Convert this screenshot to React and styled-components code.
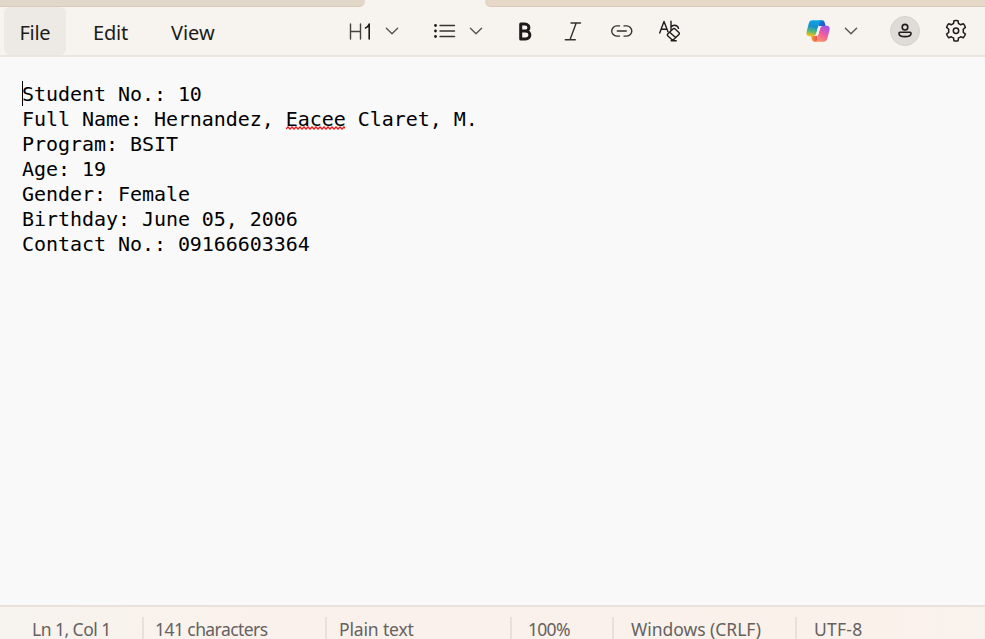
import React from "react";
import styled, { createGlobalStyle } from "styled-components";

const GlobalStyle = createGlobalStyle`
  * { box-sizing: border-box; }
  html, body { margin: 0; height: 100%; overflow: hidden; }
`;

const Window = styled.div`
  width: 985px;
  height: 639px;
  display: flex;
  flex-direction: column;
  overflow: hidden;
  background: #f9f9f9;
  font-family: "Noto Sans", sans-serif;
`;

const TabStrip = styled.div`
  height: 7px;
  flex: none;
  display: flex;
  justify-content: space-between;
  background: #f7f3ee;
`;

const InactiveTabs = styled.div`
  width: ${(p) => p.$width}px;
  background: ${(p) => p.$color};
  border-bottom: 1px solid #d9cbb9;
  border-radius: ${(p) => (p.$side === "left" ? "0 0 6px 0" : "0 0 0 6px")};
`;

const Toolbar = styled.header`
  height: 50px;
  flex: none;
  display: flex;
  background: #f7f3ee;
  border-bottom: 2px solid #eae5de;
`;

const Menus = styled.nav`
  display: flex;
  width: 343px;
  padding-left: 4px;
`;

const MenuButton = styled.button`
  width: ${(p) => p.$width}px;
  height: 48px;
  padding: 3px 0 0 ${(p) => p.$inset}px;
  border: 0;
  border-radius: 6px;
  background: ${(p) => (p.$active ? "#edeae5" : "transparent")};
  color: #1d1c1a;
  font: 400 20px/46px "Noto Sans", sans-serif;
  letter-spacing: ${(p) => p.$tracking}px;
  text-align: left;
  white-space: nowrap;
`;

const Tools = styled.div`
  display: flex;
  flex: 1;
  align-items: center;
`;

const ToolButton = styled.button`
  display: flex;
  align-items: center;
  justify-content: center;
  width: ${(p) => p.$width}px;
  height: 48px;
  margin-left: ${(p) => p.$gap || 0}px;
  padding: 0;
  border: 0;
  background: transparent;
  color: #1d1c1a;
`;

const Avatar = styled.span`
  display: grid;
  place-items: center;
  width: 30px;
  height: 30px;
  border: 1px solid #d5d1cd;
  border-radius: 50%;
  background: #dfdcd8;
`;

const Icon = styled.svg`
  display: block;
  flex: none;
  overflow: visible;
  fill: none;
  stroke: currentColor;
  stroke-width: ${(p) => p.$stroke || 1.4};
  stroke-linecap: round;
  stroke-linejoin: round;
`;

const Document = styled.main`
  flex: 1;
  min-height: 0;
  padding: 24px 22px;
  color: #000;
  font: 400 20px/27px "DejaVu Sans Mono", monospace;
  letter-spacing: -0.05px;
`;

const Line = styled.div`
  display: flex;
  height: 25px;
  white-space: pre;
`;

const Caret = styled.span`
  width: 1px;
  height: 25px;
  margin-right: -1px;
  background: #000;
`;

const Misspelled = styled.span`
  display: grid;
  grid-template-rows: 25px;
  height: 25px;
  > * { grid-area: 1 / 1; }
`;

const Squiggle = styled.svg`
  align-self: end;
  width: 59px;
  height: 4px;
  margin-bottom: 1px;
  fill: none;
  stroke: #f01818;
  stroke-width: 1.3;
`;

const StatusBar = styled.footer`
  height: 34px;
  flex: none;
  display: flex;
  padding-top: 10px;
  border-top: 2px solid #e9e2dc;
  background: linear-gradient(90deg, #f7f3ee 0, #faf1ec 260px, #faf1eb 900px, #f8f2ed 100%);
`;

const StatusItem = styled.div`
  width: ${(p) => p.$width}px;
  height: 22px;
  padding-left: ${(p) => p.$inset}px;
  border-right: ${(p) => (p.$last ? 0 : "2px solid #e8e1db")};
  color: #65625f;
  font: 400 17.5px/25px "Noto Sans", sans-serif;
  letter-spacing: ${(p) => p.$tracking}px;
  white-space: nowrap;
`;

const menus = [
  { label: "File", width: 62, inset: 15.5, tracking: -0.3, active: true },
  { label: "Edit", width: 78, inset: 27, tracking: -0.2 },
  { label: "View", width: 80, inset: 27, tracking: -0.05 },
];

const statuses = [
  { label: "Ln 1, Col 1", width: 144, inset: 32, tracking: -0.53 },
  { label: "141 characters", width: 183, inset: 11, tracking: -0.57 },
  { label: "Plain text", width: 185, inset: 12, tracking: -0.15 },
  { label: "100%", width: 102, inset: 16, tracking: -0.7 },
  { label: "Windows (CRLF)", width: 183, inset: 17, tracking: -0.03 },
  { label: "UTF-8", width: 188, inset: 17, tracking: 0.25, last: true },
];

const Chevron = () => (
  <Icon width="14" height="8" viewBox="0 0 14 8" $stroke={1.35}>
    <path d="M1.4 1.2 7 6.8l5.6-5.6" stroke="#55524e" />
  </Icon>
);

const HeadingIcon = () => (
  <Icon width="24" height="18" viewBox="-1 -0.5 24 18">
    <path d="M1.5 1.5v15M11.5 1.5v15M1.5 9h10" stroke="#44423f" />
    <path d="M16.5 5.5c2-.9 3.2-2.2 3.7-4v15" strokeWidth="1.6" />
  </Icon>
);

const ListIcon = () => (
  <Icon width="23" height="14" viewBox="0 0 23 14">
    <path d="M7 1.5h14.5M7 7h14.5M7 12.5h14.5" stroke="#363431" />
    <g fill="currentColor" stroke="none">
      <circle cx="2.5" cy="1.5" r="1.4" />
      <circle cx="2.5" cy="7" r="1.4" />
      <circle cx="2.5" cy="12.5" r="1.4" />
    </g>
  </Icon>
);

const BoldIcon = () => (
  <Icon width="14" height="19" viewBox="-0.5 0 14 19" $stroke={3}>
    <path d="M2.2 2.1h4.3c5.2 0 5.2 7 0 7H2.2zM2.2 9.1h4.8c5.8 0 5.8 7.9 0 7.9H2.2z" />
  </Icon>
);

const ItalicIcon = () => (
  <Icon width="18" height="19" viewBox="-0.5 0 18 19">
    <path d="M6.5 1h9.5M.8 17.8h10M11.7 1 5.5 17.8" stroke="#33312e" />
  </Icon>
);

const LinkIcon = () => (
  <Icon width="22" height="12" viewBox="0.5 0 22 12">
    <path d="M9 .9H6.3a5.1 5.1 0 0 0 0 10.2H9M13.5 .9h2.7a5.1 5.1 0 0 1 0 10.2h-2.7M6.8 6h9" stroke="#33312e" />
  </Icon>
);

const ClearFormatIcon = () => (
  <Icon width="22" height="22" viewBox="0.3 -0.5 22 22" $stroke={1.4}>
    <path d="M1 12.5 5.3 1l4 10.3M2.4 8.8h5.8M12.3 .8v8.4M12.3 6.8C13 5.4 14.3 4.7 15.8 4.7c2 0 3.5 1.2 4 3.2" />
    <path d="m9.2 13.3 5-4.8q1.1-1 2.2 0l3.8 3.4q1 1 0 2l-5 4.9q-1.2 1.1-2.4 0l-3.6-3.3q-1.1-1.1 0-2.2ZM11 11.8l5.8 5.3M12.5 20.2h5" />
  </Icon>
);

const CopilotIcon = () => (
  <Icon width="24" height="22" viewBox="0 0 24 22">
    <defs>
      <linearGradient id="leftRibbon" x1="0.6" y1="0" x2="0.4" y2="1">
        <stop offset="0" stopColor="#0ca5ee" />
        <stop offset=".4" stopColor="#168fcf" />
        <stop offset=".7" stopColor="#52b878" />
        <stop offset="1" stopColor="#f0c419" />
      </linearGradient>
      <linearGradient id="rightRibbon" x1="0.8" y1="0" x2="0.3" y2="1">
        <stop offset="0" stopColor="#9a55ed" />
        <stop offset=".5" stopColor="#ed5ba4" />
        <stop offset="1" stopColor="#fa9365" />
      </linearGradient>
      <linearGradient id="topFold" x1="0" y1="0" x2="1" y2="1">
        <stop offset="0" stopColor="#1389e5" />
        <stop offset="1" stopColor="#2444be" />
      </linearGradient>
      <linearGradient id="bottomFold" x1="0" y1="0" x2="1" y2="0">
        <stop offset="0" stopColor="#f4a632" />
        <stop offset="1" stopColor="#ed4857" />
      </linearGradient>
    </defs>
    <g stroke="none">
      <path d="M13 .3h3.2c1.4 0 2 .7 2.4 2l1 3.6H15c-1.5 0-2 .8-2.5 2.1z" fill="url(#topFold)" />
      <path d="M11 21.7H8.5c-1.5 0-2.1-.8-2.5-2.2L5 16h4c1.5 0 2.2-.8 2.6-2.1z" fill="url(#bottomFold)" />
      <path d="M6.6.3h8.7c-1.3.5-1.7 1.5-2.2 3.2L10.5 13c-.6 2.2-1.5 3.2-3.6 3.2H3.6C.9 16.2-.1 14.5.6 11.7l2.1-8C3.3 1.4 4.3.3 6.6.3Z" fill="url(#leftRibbon)" />
      <path d="M17.3 5.8h3.1c2.8 0 3.8 1.7 3.1 4.5l-2.1 8c-.6 2.3-1.7 3.4-4 3.4H9c1.3-.5 1.7-1.5 2.2-3.2L13.7 9c.6-2.2 1.5-3.2 3.6-3.2Z" fill="url(#rightRibbon)" />
      <path d="M12.3 6.2h4c-1.4.4-1.9 1.2-2.3 2.6l-1.4 5c-.4 1.4-1.2 2.1-2.5 2.1H8c1.2-.4 1.8-1.1 2.2-2.5z" fill="#f7f3ee" />
    </g>
  </Icon>
);

const PersonIcon = () => (
  <Icon width="14" height="14" viewBox="0 0 14 14" $stroke={1.6}>
    <circle cx="7" cy="3.2" r="2.8" />
    <path d="M2 8.2h10c.6 0 1 .4 1 1v.3c0 2-2.200 3.100-6 3.100s-6-1.100-6-3.100v-.3c0-.6.4-1 1-1Z" />
  </Icon>
);

const GearIcon = () => (
  <Icon width="22" height="22" viewBox="0 0 22 22" $stroke={1.5}>
    <path d="M9 .7q2-.4 4 0l.5 2.8q1.2.5 2.1 1.3l2.7-1q1.5 1.6 2.1 3.6l-2.2 1.9a7 7 0 0 1 0 2.9l2.2 1.9q-.6 2-2.1 3.6l-2.7-1q-.9.8-2.1 1.3l-.5 2.8q-2 .4-4 0l-.5-2.8q-1.2-.5-2.1-1.3l-2.7 1q-1.5-1.6-2.1-3.6l2.2-1.9a7 7 0 0 1 0-2.9L1.6 7.4q.6-2 2.1-3.6l2.7 1q.9-.8 2.1-1.3Z" />
    <circle cx="11" cy="10.8" r="2.7" />
  </Icon>
);

export default function App() {
  return (
    <>
      <GlobalStyle />
      <Window>
        <TabStrip>
          <InactiveTabs $width={365} $side="left" $color="#e2d8c9" />
          <InactiveTabs $width={500} $side="right" $color="#e5d8c7" />
        </TabStrip>
        <Toolbar>
          <Menus>
            {menus.map((m) => (
              <MenuButton key={m.label} $width={m.width} $inset={m.inset} $tracking={m.tracking} $active={m.active}>
                {m.label}
              </MenuButton>
            ))}
          </Menus>
          <Tools>
            <ToolButton $width={34} aria-label="Heading"><HeadingIcon /></ToolButton>
            <ToolButton $width={28} $gap={1} aria-label="Heading options"><Chevron /></ToolButton>
            <ToolButton $width={34} $gap={21} aria-label="List"><ListIcon /></ToolButton>
            <ToolButton $width={28} $gap={1} aria-label="List options"><Chevron /></ToolButton>
            <ToolButton $width={34} $gap={18} aria-label="Bold"><BoldIcon /></ToolButton>
            <ToolButton $width={34} $gap={14} aria-label="Italic"><ItalicIcon /></ToolButton>
            <ToolButton $width={34} $gap={15} aria-label="Link"><LinkIcon /></ToolButton>
            <ToolButton $width={34} $gap={14} aria-label="Clear formatting"><ClearFormatIcon /></ToolButton>
            <ToolButton $width={34} $gap={114} aria-label="Copilot"><CopilotIcon /></ToolButton>
            <ToolButton $width={28} $gap={2} aria-label="Copilot options"><Chevron /></ToolButton>
            <ToolButton $width={34} $gap={23} aria-label="Account"><Avatar><PersonIcon /></Avatar></ToolButton>
            <ToolButton $width={34} $gap={17} aria-label="Settings"><GearIcon /></ToolButton>
          </Tools>
        </Toolbar>
        <Document>
          <Line><Caret />Student No.: 10</Line>
          <Line>
            {"Full Name: Hernandez, "}
            <Misspelled>
              <span>Eacee</span>
              <Squiggle viewBox="0 0 59 4">
                <path d={"M0 3" + Array.from({ length: 15 }, () => "l2-2 2 2").join("")} />
              </Squiggle>
            </Misspelled>
            {" Claret, M."}
          </Line>
          <Line>Program: BSIT</Line>
          <Line>Age: 19</Line>
          <Line>Gender: Female</Line>
          <Line>Birthday: June 05, 2006</Line>
          <Line>Contact No.: 09166603364</Line>
        </Document>
        <StatusBar>
          {statuses.map((s) => (
            <StatusItem key={s.label} $width={s.width} $inset={s.inset} $tracking={s.tracking} $last={s.last}>
              {s.label}
            </StatusItem>
          ))}
        </StatusBar>
      </Window>
    </>
  );
}
